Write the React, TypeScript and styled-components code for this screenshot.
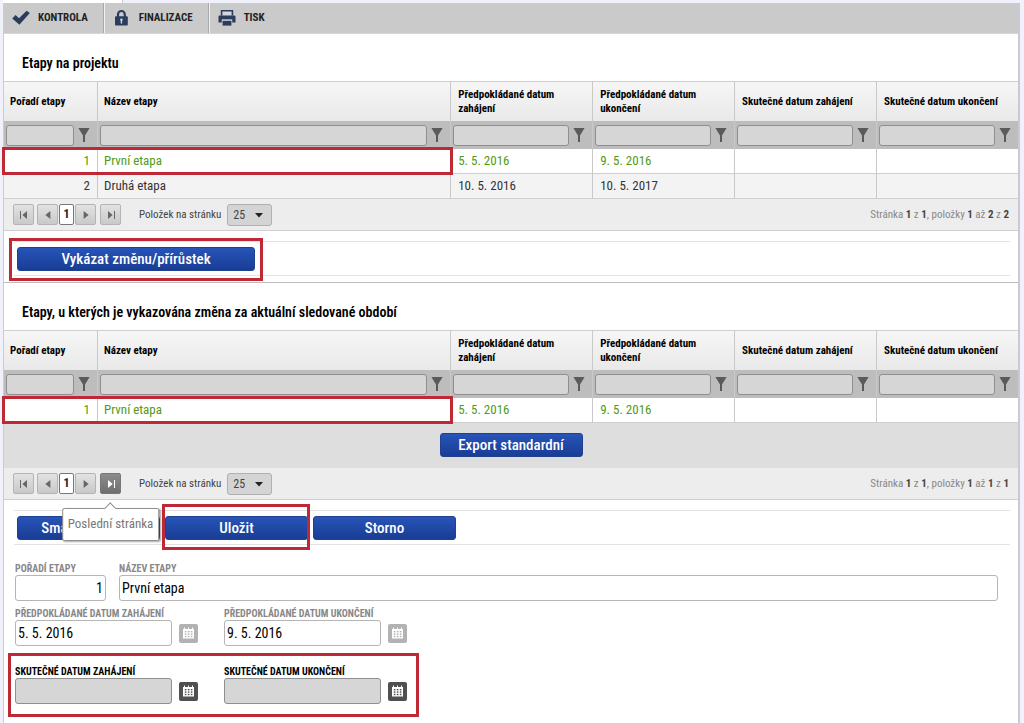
import React from 'react';
import styled, { createGlobalStyle, css } from 'styled-components';

const GlobalStyle = createGlobalStyle`
  *, *::before, *::after { box-sizing: border-box; }
  body {
    margin: 0;
    background: #f1f1fb;
    color: #333;
    font-family: 'Roboto Condensed', 'Liberation Sans Narrow', 'Roboto', sans-serif;
    font-size: 13px;
    line-height: 16px;
  }
  button, input, select { font: inherit; color: inherit; margin: 0; }
`;

const Page = styled.div`
  display: flex;
  flex-direction: column;
  min-height: 100vh;
  padding: 0 4px 0 3px;
`;

const TabStrip = styled.div`
  height: 3px;
  flex: none;
  display: flex;
`;

const TabEdge = styled.div`
  width: 120px;
  background: #fff;
  border-right: 1px solid #ccc;
`;

const Frame = styled.main`
  flex: 1;
  background: #fff;
  border-left: 1px solid #c8ccd6;
  border-right: 2px solid #cacad2;
`;

const Toolbar = styled.nav`
  display: flex;
  height: 31px;
  background: #cacaca;
  border-bottom: 1px solid #d6d6d6;
`;

const ToolButton = styled.button`
  display: flex;
  align-items: center;
  gap: 8px;
  padding: 0 15px 0 8px;
  border: 0;
  background: none;
  color: #222;
  font-size: 11px;
  font-weight: 700;

  & + & {
    border-left: 1px solid #f2f2f2;
    box-shadow: -1px 0 0 #a8a8a8;
    margin-left: 1px;
  }
  svg { display: block; }
`;

const SectionTitle = styled.h2`
  margin: 0;
  padding: 21px 18px 9px;
  font-size: 14px;
  line-height: 17px;
  font-weight: 600;
  color: #000;
`;

const Grid = styled.table`
  width: 100%;
  table-layout: fixed;
  border-collapse: separate;
  border-spacing: 0;

  th, td { padding: 0; text-align: left; }
  th + th, td + td { border-left: 1px solid #c9c9c9; }
`;

const Col = styled.col<{ $width?: string }>`
  width: ${(p) => p.$width ?? 'auto'};
`;

const HeadRow = styled.tr`
  height: 40px;
  th {
    padding: 0 7px 0 6px;
    border-top: 1px solid #cfcfcf;
    background: linear-gradient(#f6f6f6, #e9e9e9);
    color: #000;
    font-size: 11px;
    line-height: 14px;
    font-weight: 700;
    vertical-align: middle;
  }
  th:nth-child(n + 3) { padding-left: 7px; }
`;

const FilterRow = styled.tr`
  height: 28px;
  background: #bdbdbd;
`;

const FilterCell = styled.div`
  display: flex;
  align-items: center;
  gap: 4px;
  padding: 0 7px 0 2px;
`;

const FilterInput = styled.input`
  flex: 1;
  min-width: 0;
  height: 21px;
  border: 1px solid #8f8f8f;
  border-radius: 3px;
  background: #d6d6d6;
`;

const FilterButton = styled.button`
  flex: none;
  width: 12px;
  height: 16px;
  padding: 0;
  border: 0;
  background: none;
  svg { display: block; }
`;

const DataRow = styled.tr<{ $selected?: boolean; $alt?: boolean }>`
  height: 25px;
  background: ${(p) => (p.$alt ? '#f3f3f3' : '#fff')};
  color: ${(p) => (p.$selected ? '#539a17' : '#333')};
  td { padding: 0 7px 0 6px; border-bottom: 1px solid #cfcfcf; }
  td:first-child { text-align: right; }
  td:nth-child(2) { position: relative; }
  td:nth-child(n + 3) { padding-left: 7px; }
`;

const Mark = styled.span<{ $inset: string }>`
  position: absolute;
  inset: ${(p) => p.$inset};
  border: 3px solid #bf2936;
  pointer-events: none;
  z-index: 2;
`;

const Pager = styled.div`
  display: flex;
  align-items: center;
  height: 32px;
  padding: 0 9px;
  background: #ededed;
  border-bottom: 1px solid #cfcfcf;
  color: #444;
  font-size: 11px;
`;

const PageButtons = styled.div`
  display: flex;
  gap: 3px;
`;

const pageBox = css`
  height: 21px;
  border: 1px solid #b4b4b4;
  border-radius: 2px;
`;

const PageButton = styled.button<{ $active?: boolean }>`
  ${pageBox}
  width: 21px;
  padding: 0;
  display: flex;
  align-items: center;
  justify-content: center;
  background: ${(p) => (p.$active ? 'linear-gradient(#8c8c8c, #6f6f6f)' : 'linear-gradient(#e2e2e2, #c9c9c9)')};
  border-color: ${(p) => (p.$active ? '#777' : '#b4b4b4')};
  color: ${(p) => (p.$active ? '#fff' : '#666')};
`;

const CurrentPage = styled.span`
  ${pageBox}
  width: 15px;
  margin: 0 -2px;
  border-color: #777;
  background: #fff;
  color: #222;
  font-size: 12px;
  font-weight: 700;
  line-height: 19px;
  text-align: center;
`;

const LastPage = styled.div`
  position: relative;
  margin-left: 1px;
`;

const Tooltip = styled.div`
  position: absolute;
  z-index: 3;
  top: calc(100% + 14px);
  left: 50%;
  transform: translateX(-50%);
  padding: 7px 5px 8px;
  border: 1px solid #909090;
  border-radius: 2px;
  background: #fff;
  box-shadow: 1px 1px 2px rgba(0, 0, 0, 0.35);
  color: #777;
  font-size: 13px;
  white-space: nowrap;

  &::before {
    content: '';
    position: absolute;
    top: -5px;
    left: 50%;
    width: 8px;
    height: 8px;
    margin-left: -4px;
    background: #fff;
    border: solid #909090;
    border-width: 1px 0 0 1px;
    transform: rotate(45deg);
  }
`;

const PageSize = styled.label`
  display: flex;
  align-items: center;
  gap: 6px;
  margin-left: 18px;
`;

const SelectBox = styled.span`
  position: relative;
  svg {
    position: absolute;
    right: 9px;
    top: 9px;
    pointer-events: none;
  }
`;

const Select = styled.select`
  display: block;
  appearance: none;
  width: 45px;
  height: 22px;
  padding: 0 5px;
  border: 1px solid #b0b0b0;
  border-radius: 3px;
  background: #d4d4d4;
  font-size: 12px;
`;

const PagerInfo = styled.p`
  margin: 0 0 0 auto;
  color: #888;
  b { color: #444; }
`;

const ExportBar = styled.div`
  display: flex;
  justify-content: center;
  padding: 10px 0 11px;
  background: #dedede;
`;

const ActionBar = styled.div`
  display: flex;
  gap: 5px;
  margin: 10px 8px 0 10px;
  padding: 5px 3px 4px;
  border: solid #e2e2e2;
  border-width: 1px 0;
`;

const Divider = styled.hr`
  margin: 6px 0 0;
  border: 0;
  border-top: 1px solid #bdbdbd;
`;

const Marked = styled.div`
  position: relative;
  width: fit-content;
`;

const ActionButton = styled.button<{ $wide?: boolean }>`
  display: block;
  width: ${(p) => (p.$wide ? '238px' : '143px')};
  height: 24px;
  padding: 0;
  border: 1px solid #20418f;
  border-radius: 3px;
  background: linear-gradient(#2854b8, #183d94);
  color: #fff;
  font-size: 15px;
  font-weight: 500;
  line-height: 22px;
  white-space: nowrap;
`;

const Form = styled.form`
  padding: 18px 20px 0 11px;
`;

const FormRow = styled.div<{ $gap: number; $space?: number }>`
  display: flex;
  gap: ${(p) => p.$gap}px;
  margin-top: ${(p) => p.$space ?? 0}px;
`;

const Field = styled.div<{ $width?: number }>`
  flex: ${(p) => (p.$width ? `0 0 ${p.$width}px` : '1')};
  min-width: 0;
`;

const FieldLabel = styled.label<{ $strong?: boolean }>`
  display: block;
  color: ${(p) => (p.$strong ? '#000' : '#888')};
  font-size: 10px;
  line-height: 12px;
  font-weight: 700;
  white-space: nowrap;
`;

const InputLine = styled.div`
  display: flex;
  align-items: center;
  gap: 7px;
`;

const TextInput = styled.input<{ $filled?: boolean; $right?: boolean }>`
  flex: 1;
  min-width: 0;
  height: 26px;
  padding: 0 2px;
  border: 1px solid ${(p) => (p.$filled ? '#8f8f8f' : '#b5b5b5')};
  border-radius: 3px;
  background: ${(p) => (p.$filled ? '#d6d6d6' : '#fff')};
  color: #000;
  font-size: 14px;
  text-align: ${(p) => (p.$right ? 'right' : 'left')};
`;

const CalendarButton = styled.button`
  flex: none;
  padding: 0;
  border: 0;
  background: none;
  svg { display: block; }
`;

const CheckIcon = () => (
  <svg width="18" height="18" viewBox="0 0 18 18">
    <path d="M0.2 9.4 3.6 6 7 9.2 14.6 1.8 17.8 4 7.4 15.8Z" fill="#2c3c5c" />
  </svg>
);

const LockIcon = () => (
  <svg width="18" height="18" viewBox="0 0 18 18">
    <path d="M5 9V5.4a3.4 3.4 0 0 1 6.8 0V9" fill="none" stroke="#2c3c5c" strokeWidth="2.2" />
    <rect x="2" y="7.2" width="12.8" height="9.4" rx="1" fill="#2c3c5c" />
    <path d="M8.4 9.4a1.3 1.3 0 0 1 .7 2.4v2.6H7.7v-2.6a1.3 1.3 0 0 1 .7-2.4Z" fill="#d5d9e2" />
  </svg>
);

const PrintIcon = () => (
  <svg width="18" height="18" viewBox="0 0 18 18">
    <path d="M3.6 6.4V1.8h10.8v4.6" fill="#d4d6da" stroke="#2c3c5c" strokeWidth="1.6" />
    <path d="M0.5 7.6q0-1 1-1h15q1 0 1 1v6h-3.3v-2.8H3.8v2.8H0.5Z" fill="#2c3c5c" />
    <path d="M4.6 11.8h8.8v4.8H4.6Z" fill="#2c3c5c" />
    <path d="M3.8 10.4h10.4v1H3.8Z" fill="#cacaca" />
  </svg>
);

const FunnelIcon = () => (
  <svg width="12" height="16" viewBox="0 0 12 16">
    <path d="M0.4 1h11.2L7 8.6V15H5V8.6Z" fill="#5a5a5a" />
  </svg>
);

type PagerKind = 'first' | 'prev' | 'next' | 'last';

const pagerPaths: Record<PagerKind, string> = {
  first: 'M1 1h1v8H1ZM8 1v8L3.4 5Z',
  prev: 'M7.4 1v8L2.4 5Z',
  next: 'M2.6 1v8L7.6 5Z',
  last: 'M8 1h1v8H8ZM2 1v8L6.6 5Z',
};

const PagerIcon = ({ kind }: { kind: PagerKind }) => (
  <svg width="10" height="10" viewBox="0 0 10 10">
    <path d={pagerPaths[kind]} fill="currentColor" />
  </svg>
);

const CalendarIcon = ({ active }: { active?: boolean }) => {
  const tone = active ? '#505050' : '#b2b2b2';
  return (
    <svg width="19" height="19" viewBox="0 0 19 19">
      <rect width="19" height="19" rx="2" fill={tone} />
      <path d="M4 5h1V3.6h1V5h3V3.6h1V5h3V3.6h1V5h1v9.4H4Z" fill="#fff" />
      {[7, 9.4, 11.8].map((y) =>
        [5.8, 8.8, 11.8].map((x) => <rect key={`${x}-${y}`} x={x} y={y} width="1.6" height="1.4" fill={tone} />),
      )}
    </svg>
  );
};

const columns = [
  'Pořadí etapy',
  'Název etapy',
  'Předpokládané datum zahájení',
  'Předpokládané datum ukončení',
  'Skutečné datum zahájení',
  'Skutečné datum ukončení',
];

interface Stage {
  order: number;
  name: string;
  start: string;
  end: string;
}

const stages: Stage[] = [
  { order: 1, name: 'První etapa', start: '5. 5. 2016', end: '9. 5. 2016' },
  { order: 2, name: 'Druhá etapa', start: '10. 5. 2016', end: '10. 5. 2017' },
];

const StageGrid = ({ rows }: { rows: Stage[] }) => (
  <Grid>
    <colgroup>
      <Col $width="93px" />
      <Col />
      <Col $width="14%" />
      <Col $width="14%" />
      <Col $width="14%" />
      <Col $width="14%" />
    </colgroup>
    <thead>
      <HeadRow>
        {columns.map((c) => (
          <th key={c} scope="col">{c}</th>
        ))}
      </HeadRow>
      <FilterRow>
        {columns.map((c) => (
          <td key={c}>
            <FilterCell>
              <FilterInput type="text" aria-label={c} />
              <FilterButton type="button" aria-label={c}>
                <FunnelIcon />
              </FilterButton>
            </FilterCell>
          </td>
        ))}
      </FilterRow>
    </thead>
    <tbody>
      {rows.map((r, i) => (
        <DataRow key={r.order} $selected={i === 0} $alt={i % 2 === 1}>
          <td>{r.order}</td>
          <td>
            {r.name}
            {i === 0 && <Mark $inset="-2px -3px -2px -96px" />}
          </td>
          <td>{r.start}</td>
          <td>{r.end}</td>
          <td />
          <td />
        </DataRow>
      ))}
    </tbody>
  </Grid>
);

const PagerBar = ({ total, hint }: { total: number; hint?: string }) => (
  <Pager>
    <PageButtons>
      <PageButton type="button" aria-label="První stránka"><PagerIcon kind="first" /></PageButton>
      <PageButton type="button" aria-label="Předchozí stránka"><PagerIcon kind="prev" /></PageButton>
      <CurrentPage>1</CurrentPage>
      <PageButton type="button" aria-label="Další stránka"><PagerIcon kind="next" /></PageButton>
      <LastPage>
        <PageButton type="button" aria-label="Poslední stránka" $active={Boolean(hint)}>
          <PagerIcon kind="last" />
        </PageButton>
        {hint && <Tooltip role="tooltip">{hint}</Tooltip>}
      </LastPage>
    </PageButtons>
    <PageSize>
      Položek na stránku
      <SelectBox>
        <Select defaultValue="25">
          <option value="25">25</option>
        </Select>
        <svg width="8" height="5" viewBox="0 0 8 5">
          <path d="M0 0h8L4 4.6Z" fill="#222" />
        </svg>
      </SelectBox>
    </PageSize>
    <PagerInfo>
      Stránka <b>1</b> z <b>1</b>, položky <b>1</b> až <b>{total}</b> z <b>{total}</b>
    </PagerInfo>
  </Pager>
);

const DateField = ({ id, label, value, editable }: { id: string; label: string; value: string; editable?: boolean }) => (
  <Field $width={183}>
    <FieldLabel htmlFor={id} $strong={editable}>{label}</FieldLabel>
    <InputLine>
      <TextInput id={id} type="text" defaultValue={value} readOnly={!editable} $filled={editable} />
      <CalendarButton type="button" aria-label={label}>
        <CalendarIcon active={editable} />
      </CalendarButton>
    </InputLine>
  </Field>
);

export default function App() {
  return (
    <>
      <GlobalStyle />
      <Page>
        <TabStrip><TabEdge /></TabStrip>
        <Frame>
          <Toolbar>
            <ToolButton type="button"><CheckIcon />KONTROLA</ToolButton>
            <ToolButton type="button"><LockIcon />FINALIZACE</ToolButton>
            <ToolButton type="button"><PrintIcon />TISK</ToolButton>
          </Toolbar>

          <SectionTitle>Etapy na projektu</SectionTitle>
          <StageGrid rows={stages} />
          <PagerBar total={2} />
          <ActionBar>
            <Marked>
              <ActionButton type="button" $wide>Vykázat změnu/přírůstek</ActionButton>
              <Mark $inset="-9px -8px -10px -8px" />
            </Marked>
          </ActionBar>
          <Divider />

          <SectionTitle>Etapy, u kterých je vykazována změna za aktuální sledované období</SectionTitle>
          <StageGrid rows={stages.slice(0, 1)} />
          <ExportBar>
            <ActionButton type="button">Export standardní</ActionButton>
          </ExportBar>
          <PagerBar total={1} hint="Poslední stránka" />
          <ActionBar>
            <ActionButton type="button">Smazat záznam</ActionButton>
            <Marked>
              <ActionButton type="button">Uložit</ActionButton>
              <Mark $inset="-12px -2px -10px -3px" />
            </Marked>
            <ActionButton type="button">Storno</ActionButton>
          </ActionBar>

          <Form>
            <FormRow $gap={13}>
              <Field $width={91}>
                <FieldLabel htmlFor="order">POŘADÍ ETAPY</FieldLabel>
                <InputLine><TextInput id="order" type="text" defaultValue="1" readOnly $right /></InputLine>
              </Field>
              <Field>
                <FieldLabel htmlFor="name">NÁZEV ETAPY</FieldLabel>
                <InputLine><TextInput id="name" type="text" defaultValue="První etapa" readOnly /></InputLine>
              </Field>
            </FormRow>
            <FormRow $gap={26} $space={7}>
              <DateField id="planned-start" label="PŘEDPOKLÁDANÉ DATUM ZAHÁJENÍ" value="5. 5. 2016" />
              <DateField id="planned-end" label="PŘEDPOKLÁDANÉ DATUM UKONČENÍ" value="9. 5. 2016" />
            </FormRow>
            <Marked>
              <FormRow $gap={26} $space={20}>
                <DateField id="real-start" label="SKUTEČNÉ DATUM ZAHÁJENÍ" value="" editable />
                <DateField id="real-end" label="SKUTEČNÉ DATUM UKONČENÍ" value="" editable />
              </FormRow>
              <Mark $inset="-13px -12px -13px -7px" />
            </Marked>
          </Form>
        </Frame>
      </Page>
    </>
  );
}
